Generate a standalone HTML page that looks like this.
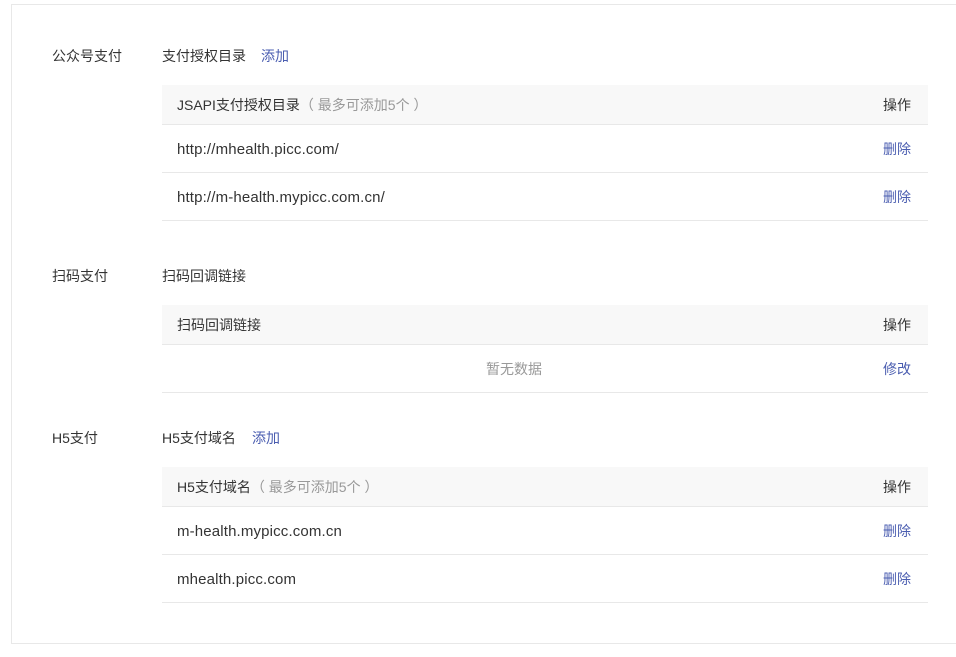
<!DOCTYPE html>
<html><head><meta charset="utf-8"><style>
*{margin:0;padding:0;box-sizing:border-box}
body{width:956px;height:657px;background:#fff;font-family:"Liberation Sans","Noto Sans CJK SC",sans-serif;font-size:14px;color:#333;position:relative;overflow:hidden}
.box{position:absolute;left:11px;top:4px;width:960px;height:640px;border:1px solid #e8e8e8}
.a{position:absolute;line-height:22px;white-space:nowrap}
.link{color:#4a5db0}
.tb{position:absolute;left:162px;width:766px}
.r{position:relative;height:48px;border-bottom:1px solid #e8e8e8;line-height:49px;padding-left:15px}
.h{height:40px;line-height:41px;background:#f8f8f8}
.op{position:absolute;right:17px;top:0}
.m{color:#999}
.u{font-size:15px;letter-spacing:0.15px}
</style></head><body>
<div class="box"></div>
<div class="a" style="left:52px;top:45px">公众号支付</div>
<div class="a" style="left:162px;top:45px">支付授权目录</div>
<div class="a link" style="left:261px;top:45px">添加</div>
<div class="tb" style="top:85px">
<div class="r h">JSAPI支付授权目录<span class="m">（ 最多可添加5个 ）</span><span class="op">操作</span></div>
<div class="r"><span class="u">http://mhealth.picc.com/</span><span class="op link">删除</span></div>
<div class="r"><span class="u">http://m-health.mypicc.com.cn/</span><span class="op link">删除</span></div>
</div>
<div class="a" style="left:52px;top:265px">扫码支付</div>
<div class="a" style="left:162px;top:265px">扫码回调链接</div>
<div class="tb" style="top:305px">
<div class="r h">扫码回调链接<span class="op">操作</span></div>
<div class="r"><span class="m" style="position:absolute;left:324px">暂无数据</span><span class="op link">修改</span></div>
</div>
<div class="a" style="left:52px;top:427px">H5支付</div>
<div class="a" style="left:162px;top:427px">H5支付域名</div>
<div class="a link" style="left:252px;top:427px">添加</div>
<div class="tb" style="top:467px">
<div class="r h">H5支付域名<span class="m">（ 最多可添加5个 ）</span><span class="op">操作</span></div>
<div class="r"><span class="u">m-health.mypicc.com.cn</span><span class="op link">删除</span></div>
<div class="r"><span class="u">mhealth.picc.com</span><span class="op link">删除</span></div>
</div>
</body></html>
